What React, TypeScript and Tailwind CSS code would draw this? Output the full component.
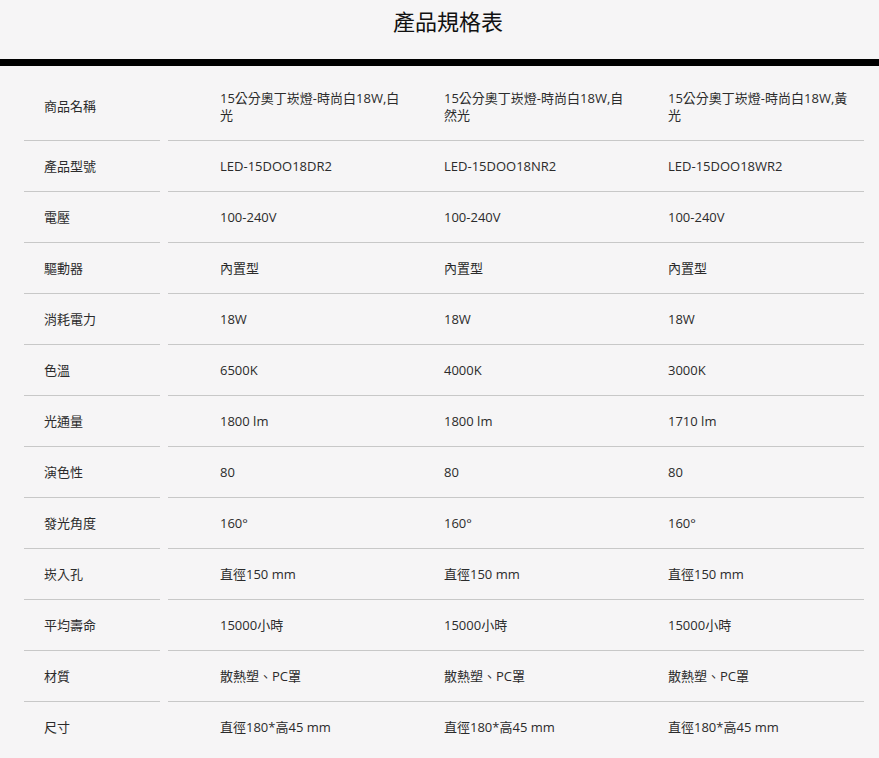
import React from "react";

type Row = {
  label: string;
  values: string[];
};

const ROWS: Row[] = [
  {
    label: "商品名稱",
    values: [
      "15公分奧丁崁燈-時尚白18W,白光",
      "15公分奧丁崁燈-時尚白18W,自然光",
      "15公分奧丁崁燈-時尚白18W,黃光",
    ],
  },
  { label: "產品型號", values: ["LED-15DOO18DR2", "LED-15DOO18NR2", "LED-15DOO18WR2"] },
  { label: "電壓", values: ["100-240V", "100-240V", "100-240V"] },
  { label: "驅動器", values: ["內置型", "內置型", "內置型"] },
  { label: "消耗電力", values: ["18W", "18W", "18W"] },
  { label: "色溫", values: ["6500K", "4000K", "3000K"] },
  { label: "光通量", values: ["1800 lm", "1800 lm", "1710 lm"] },
  { label: "演色性", values: ["80", "80", "80"] },
  { label: "發光角度", values: ["160°", "160°", "160°"] },
  { label: "崁入孔", values: ["直徑150 mm", "直徑150 mm", "直徑150 mm"] },
  { label: "平均壽命", values: ["15000小時", "15000小時", "15000小時"] },
  { label: "材質", values: ["散熱塑、PC罩", "散熱塑、PC罩", "散熱塑、PC罩"] },
  { label: "尺寸", values: ["直徑180*高45 mm", "直徑180*高45 mm", "直徑180*高45 mm"] },
];

const App: React.FC = () => {
  return (
    <div
      className="min-h-[758px] bg-[#f6f5f6] text-[#2b2b2b]"
      style={{ fontFamily: '"Open Sans", "Noto Sans CJK TC", sans-serif' }}
    >
      {/* TITLE */}
      <div className="h-[59px] pt-[6px] pl-[17px] text-center">
        <h1 className="text-[22px] leading-[30px] font-normal text-[#111]">產品規格表</h1>
      </div>
      <div className="h-[7px] bg-black" />

      {/* TABLE */}
      <div className="mt-[7px] pl-6 pr-[15px] text-[13px] leading-[17px]">
        {ROWS.map((row, i) => {
          const last = i === ROWS.length - 1;
          return (
            <div key={row.label} className="flex gap-2">
              <div
                className={`w-[136px] shrink-0 pl-5 py-[16.5px] flex items-center ${
                  last ? "" : "border-b border-[#c8c8c8]"
                }`}
              >
                {row.label}
              </div>
              <div
                className={`flex-1 flex items-center pl-[52px] py-[16.5px] ${
                  last ? "" : "border-b border-[#c8c8c8]"
                }`}
              >
                {row.values.map((v, j) => (
                  <div
                    key={j}
                    className={`break-all ${j < 2 ? "w-[224px] pr-[44px]" : "flex-1 pr-[14px]"}`}
                  >
                    {v}
                  </div>
                ))}
              </div>
            </div>
          );
        })}
      </div>
    </div>
  );
};

export default App;
